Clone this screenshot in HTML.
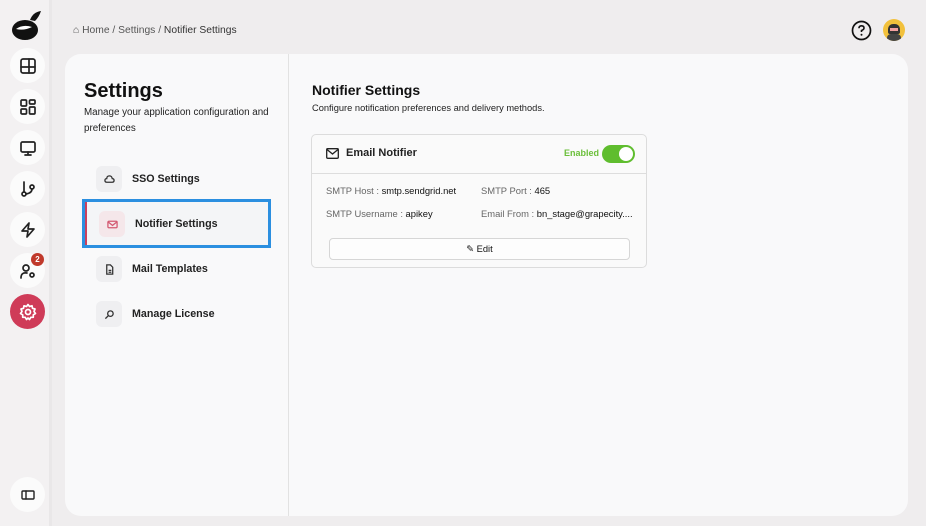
<!DOCTYPE html>
<html><head><style>
*{box-sizing:border-box;margin:0;padding:0}
body{width:926px;height:526px;overflow:hidden;background:#efedee;font-family:"Liberation Sans",sans-serif;color:#111;position:relative}
.side{position:absolute;left:0;top:0;width:52px;height:526px;background:#f3f1f2;border-right:3px solid #e9e7e8}
.nb{position:absolute;left:10px;width:35px;height:35px;border-radius:50%;background:#fbfbfb;display:flex;align-items:center;justify-content:center}
.nb svg{width:18px;height:18px;fill:none;stroke:#222;stroke-width:1.7;stroke-linecap:round;stroke-linejoin:round}
.card{position:absolute;left:65px;top:54px;width:843px;height:462px;background:#f9f9fa;border-radius:16px}
.div{position:absolute;left:288px;top:54px;width:1px;height:462px;background:#e2e2e2}
.mi{position:absolute;left:96px;height:26px;display:flex;align-items:center;font-size:10.7px;font-weight:bold;color:#222}
.ic{width:26px;height:26px;border-radius:6px;background:#efeff1;margin-right:10px;display:flex;align-items:center;justify-content:center}
.ic svg{width:11px;height:11px;fill:none;stroke:#333;stroke-width:1.4}
.lbl{color:#666}
.f{font-size:9.4px}
</style></head><body>
<div class="side">
<svg style="position:absolute;left:11px;top:8px" width="32" height="34" viewBox="0 0 32 34"><ellipse cx="14" cy="22" rx="13" ry="10" fill="#111"/><path d="M19 12 Q22 4 30 3 Q28 9 24 13Z" fill="#111"/><path d="M5 21 Q12 16 21 19 Q13 23 5 21Z" fill="#fff"/></svg>
<div class="nb" style="top:48px"><svg viewBox="0 0 18 18"><rect x="2" y="2" width="14" height="14" rx="2"/><path d="M2 10H16M10 2V16"/></svg></div>
<div class="nb" style="top:89px"><svg viewBox="0 0 18 18"><rect x="2" y="2" width="5.5" height="6" rx="1"/><rect x="10.5" y="2" width="5.5" height="4" rx="1"/><rect x="2" y="11" width="5.5" height="5" rx="1"/><rect x="10.5" y="9" width="5.5" height="7" rx="1"/></svg></div>
<div class="nb" style="top:130px"><svg viewBox="0 0 18 18"><rect x="2" y="3" width="14" height="10" rx="1.5"/><path d="M9 13V16M6 16H12"/></svg></div>
<div class="nb" style="top:171px"><svg viewBox="0 0 18 18"><circle cx="5" cy="14" r="2"/><circle cx="13" cy="7" r="2"/><path d="M5 2V12M13 9Q13 13 7 14"/></svg></div>
<div class="nb" style="top:212px"><svg viewBox="0 0 18 18"><path d="M10 2L3 10H9L8 16L15 8H9Z"/></svg></div>
<div class="nb" style="top:253px"><svg viewBox="0 0 18 18"><circle cx="7" cy="6" r="3"/><path d="M2 16Q2 10 8 11"/><circle cx="13" cy="13" r="2"/></svg></div>
<div style="position:absolute;left:31px;top:253px;width:13px;height:13px;border-radius:50%;background:#c0392b;color:#fff;font-size:8px;font-weight:bold;text-align:center;line-height:13px">2</div>
<div class="nb" style="top:294px;background:#cf3b58"><svg viewBox="0 0 18 18" style="stroke:#fff"><circle cx="9" cy="9" r="2.5"/><path d="M9 1.5L10.5 3.5L13 2.8L13.5 5.3L16 6L15 8.5L16.5 10.5L14.3 11.8L14.3 14.3L11.8 14.3L10.5 16.5L9 15L7.5 16.5L6.2 14.3L3.7 14.3L3.7 11.8L1.5 10.5L3 8.5L2 6L4.5 5.3L5 2.8L7.5 3.5Z"/></svg></div>
<div class="nb" style="top:477px"><svg viewBox="0 0 18 18" style="stroke-width:1.4"><rect x="3" y="5" width="12" height="8" rx="1"/><path d="M7 5V13"/></svg></div>
</div>
<div style="position:absolute;left:73px;top:25px;font-size:10.3px;color:#555">⌂ Home / Settings / <span style="color:#333">Notifier Settings</span></div>
<svg style="position:absolute;left:851px;top:20px" width="21" height="21" viewBox="0 0 21 21"><circle cx="10.5" cy="10.5" r="9" fill="none" stroke="#111" stroke-width="1.7"/><path d="M8 8.3Q8 5.8 10.5 5.8Q13 5.8 13 8Q13 9.6 10.5 10.5V12" fill="none" stroke="#111" stroke-width="1.6"/><circle cx="10.5" cy="14.8" r="1" fill="#111"/></svg>
<div style="position:absolute;left:883px;top:19px;width:22px;height:22px;border-radius:50%;background:#f2c13c;overflow:hidden"><div style="position:absolute;left:5px;top:5px;width:12px;height:10px;background:#333;border-radius:5px 5px 2px 2px"></div><div style="position:absolute;left:7px;top:9px;width:8px;height:3px;background:#f3a0a0"></div><div style="position:absolute;left:4px;top:15px;width:14px;height:8px;background:#444;border-radius:4px 4px 0 0"></div></div>
<div class="card"></div>
<div class="div"></div>
<div style="position:absolute;left:84px;top:80px;font-size:20px;font-weight:bold">Settings</div>
<div style="position:absolute;left:84px;top:105px;width:200px;font-size:9.8px;line-height:16px;color:#222">Manage your application configuration and preferences</div>
<div class="mi" style="top:166px"><div class="ic"><svg viewBox="0 0 12 12"><path d="M3 9H9Q11 9 11 7Q11 5 9 5Q8.5 2 6 2Q3 2 3 5Q1 5 1 7Q1 9 3 9Z"/></svg></div>SSO Settings</div>
<div style="position:absolute;left:82px;top:199px;width:189px;height:49px;border:3px solid #2b8fe0;background:#f4f5f7"><div style="position:absolute;left:0;top:0;width:2px;height:43px;background:#c9405e"></div></div>
<div class="mi" style="top:211px;left:99px"><div class="ic" style="background:#f5e7ea"><svg viewBox="0 0 12 12" style="stroke:#d45a72"><rect x="1" y="2.5" width="10" height="7" rx="1"/><path d="M1 3L6 7L11 3"/></svg></div>Notifier Settings</div>
<div class="mi" style="top:256px"><div class="ic"><svg viewBox="0 0 12 12"><path d="M3 1H7L9.5 3.5V11H3Z M5 7H8M5 9H8"/></svg></div>Mail Templates</div>
<div class="mi" style="top:301px"><div class="ic"><svg viewBox="0 0 12 12"><circle cx="7" cy="5" r="3"/><path d="M5 7L1.5 10.5"/></svg></div>Manage License</div>
<div style="position:absolute;left:312px;top:82px;font-size:14px;font-weight:bold">Notifier Settings</div>
<div style="position:absolute;left:312px;top:103px;font-size:9.3px;color:#222">Configure notification preferences and delivery methods.</div>
<div style="position:absolute;left:311px;top:134px;width:336px;height:134px;border:1px solid #dcdcdc;border-radius:5px;background:#fafafa">
<div style="height:39px;border-bottom:1px solid #ddd;position:relative">
<svg style="position:absolute;left:14px;top:13px" width="13" height="11" viewBox="0 0 13 11"><rect x="0.7" y="0.7" width="11.6" height="9.6" rx="1" fill="none" stroke="#222" stroke-width="1.3"/><path d="M1 1.5L6.5 6L12 1.5" fill="none" stroke="#222" stroke-width="1.3"/></svg>
<div style="position:absolute;left:34px;top:12px;font-size:11px;font-weight:bold;color:#222">Email Notifier</div>
<div style="position:absolute;left:252px;top:13px;font-size:9px;font-weight:bold;color:#6bbf3a">Enabled</div>
<div style="position:absolute;left:290px;top:10px;width:33px;height:18px;border-radius:9px;background:#5fbd2e"><div style="position:absolute;right:2px;top:2px;width:14px;height:14px;border-radius:50%;background:#fff"></div></div>
</div>
<div class="f" style="position:absolute;left:14px;top:50px"><span class="lbl">SMTP Host : </span>smtp.sendgrid.net</div>
<div class="f" style="position:absolute;left:169px;top:50px"><span class="lbl">SMTP Port : </span>465</div>
<div class="f" style="position:absolute;left:14px;top:73px"><span class="lbl">SMTP Username : </span>apikey</div>
<div class="f" style="position:absolute;left:169px;top:73px"><span class="lbl">Email From : </span>bn_stage@grapecity....</div>
<div style="position:absolute;left:17px;top:103px;width:301px;height:22px;border:1px solid #d6d6d6;border-radius:4px;background:#fdfdfd;text-align:center;font-size:9.3px;line-height:20px">✎ Edit</div>
</div>
</body></html>
